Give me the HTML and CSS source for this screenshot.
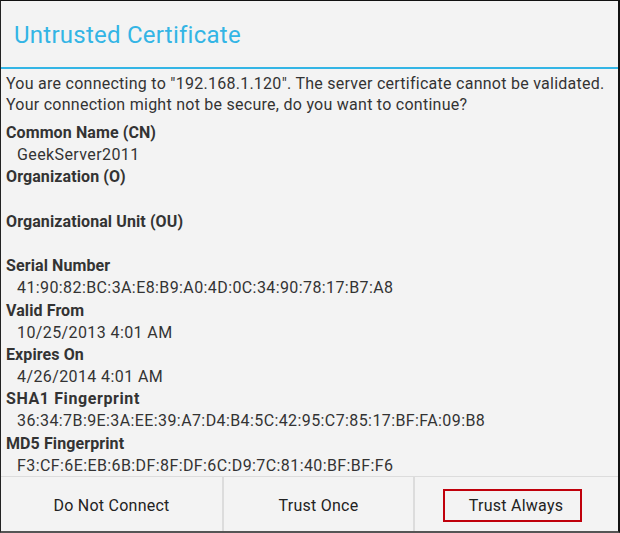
FILE: index.html
```html
<!DOCTYPE html>
<html>
<head>
<meta charset="utf-8">
<link rel="stylesheet" href="styles.css">
</head>
<body>
<div class="dialog">
  <div class="header">Untrusted Certificate</div>
  <div class="content">
    <p class="intro">You are connecting to "192.168.1.120". The server certificate cannot be validated. Your connection might not be secure, do you want to continue?</p>
    <dl class="fields">
      <dt>Common Name (CN)</dt>
      <dd>GeekServer2011</dd>
      <dt>Organization (O)</dt>
      <dd></dd>
      <dt>Organizational Unit (OU)</dt>
      <dd></dd>
      <dt>Serial Number</dt>
      <dd>41:90:82:BC:3A:E8:B9:A0:4D:0C:34:90:78:17:B7:A8</dd>
      <dt>Valid From</dt>
      <dd>10/25/2013 4:01 AM</dd>
      <dt>Expires On</dt>
      <dd>4/26/2014 4:01 AM</dd>
      <dt class="wide">SHA1 Fingerprint</dt>
      <dd>36:34:7B:9E:3A:EE:39:A7:D4:B4:5C:42:95:C7:85:17:BF:FA:09:B8</dd>
      <dt>MD5 Fingerprint</dt>
      <dd>F3:CF:6E:EB:6B:DF:8F:DF:6C:D9:7C:81:40:BF:BF:F6</dd>
    </dl>
  </div>
  <div class="buttons">
    <div class="btn">Do Not Connect</div>
    <div class="btn">Trust Once</div>
    <div class="btn"><span class="highlight">Trust Always</span></div>
  </div>
</div>
</body>
</html>
```
FILE: styles.css
```css
html, body {
  margin: 0;
  padding: 0;
  background: #f3f3f3;
}
.dialog {
  width: 620px;
  height: 533px;
  box-sizing: border-box;
  border-top: 1px solid #111;
  border-left: 1px solid #222;
  border-right: 2px solid #111;
  border-bottom: 2px solid #555;
  background: #f3f3f3;
  display: flex;
  flex-direction: column;
  font-family: Roboto, "Noto Sans", sans-serif;
  color: #333;
}
.header {
  height: 68px;
  box-sizing: border-box;
  padding: 20px 0 0 13px;
  font-size: 24px;
  line-height: 28px;
  letter-spacing: 0.25px;
  color: #33b5e5;
  border-bottom: 2px solid #33b5e5;
}
.content {
  flex: 1;
  padding: 4px 0 0 5px;
  font-size: 16px;
  overflow: hidden;
}
.intro {
  margin: 0;
  line-height: 21px;
  letter-spacing: 0.26px;
}
.fields {
  margin: 7px 0 0 0;
}
.fields dt {
  font-weight: bold;
  line-height: 22.2px;
  height: 22.2px;
  letter-spacing: 0.1px;
}
.fields dt.wide {
  letter-spacing: 0.6px;
}
.fields dd {
  margin: 0 0 0 11px;
  line-height: 22.2px;
  height: 22.2px;
  letter-spacing: 0.4px;
}
.buttons {
  display: grid;
  grid-template-columns: 221px 191px 1fr;
  height: 54px;
  border-top: 1px solid #dcdcdc;
}
.btn {
  display: flex;
  align-items: center;
  justify-content: center;
  font-size: 16px;
  letter-spacing: 0.25px;
  color: #222;
  padding-top: 2px;
}
.btn + .btn {
  border-left: 2px solid #dcdcdc;
}
.highlight {
  display: inline-block;
  border: 2px solid #c0000b;
  padding: 6px 17px 6px 24px;
  line-height: 17px;
  margin-right: 8px;
}
```
